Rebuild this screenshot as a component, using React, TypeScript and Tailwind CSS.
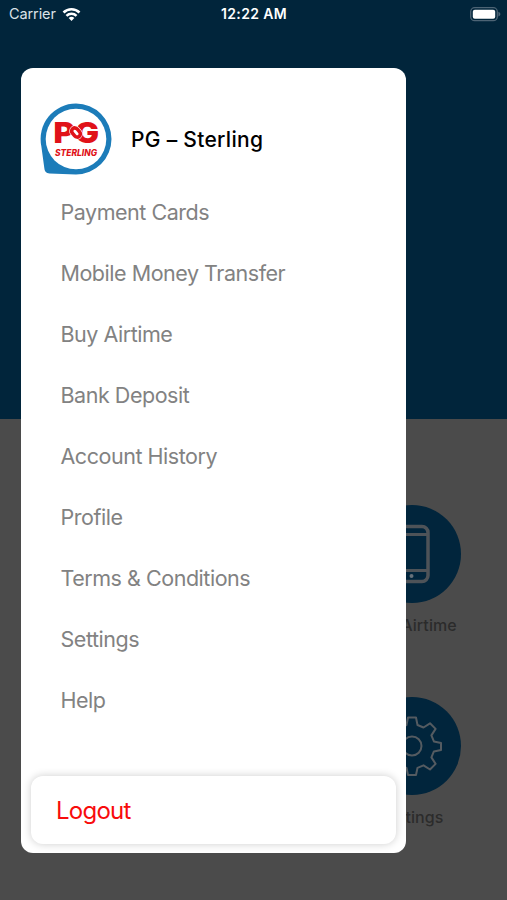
import type { ReactNode } from 'react'

const menuItems = [
  'Payment Cards',
  'Mobile Money Transfer',
  'Buy Airtime',
  'Bank Deposit',
  'Account History',
  'Profile',
  'Terms & Conditions',
  'Settings',
  'Help',
]

function WifiIcon() {
  return (
    <svg width="19" height="15" viewBox="0 0 20 15" fill="none" stroke="#fff" strokeWidth="2.7">
      <path d="M1.6 5.4a12 12 0 0 1 16.8 0" />
      <path d="M4.7 8.9a7.6 7.6 0 0 1 10.6 0" />
      <path d="M10 14.400 7 11.300a4.400 4.400 0 0 1 6 0Z" fill="#fff" stroke="none" />
    </svg>
  )
}

function BatteryIcon() {
  return (
    <svg width="31" height="15" viewBox="0 0 31 15">
      <rect x="0.7" y="0.7" width="26.6" height="13" rx="4" fill="none" stroke="#4d6475" strokeWidth="1.3" />
      <rect x="2.800" y="2.700" width="22.400" height="9" rx="2" fill="#fff" />
      <path d="M28.400 4.800c2.600 1 2.600 3.800 0 4.800Z" fill="#4d6475" />
    </svg>
  )
}

function Logo() {
  return (
    <svg width="72" height="72" viewBox="0 0 72 72" fontFamily="Inter, sans-serif">
      <path
        d="M36 .5a35.500 35.500 0 0 1 0 71L9.500 70.600Q4.500 70 4.300 65L1.300 43A35.500 35.500 0 0 1 36 .5Z"
        fill="#1c7cb9"
      />
      <circle cx="36" cy="36" r="30.300" fill="#fff" />
      <text x="13.600" y="39.800" fontSize="28" fontWeight="900" fill="#e01219" textLength="45.500" lengthAdjust="spacingAndGlyphs">
        PG
      </text>
      {/* interlocked link between the two letters */}
      <g transform="rotate(-40 36 29.500)" fill="none">
        <rect x="32.800" y="24.500" width="6.400" height="10" rx="3.200" stroke="#fff" strokeWidth="4.800" />
        <rect x="32.800" y="24.500" width="6.400" height="10" rx="3.200" fill="#fff" stroke="#e01219" strokeWidth="3.600" />
      </g>
      <text x="15" y="53.300" fontSize="8.700" fontWeight="800" fontStyle="italic" fill="#e01219" textLength="42" lengthAdjust="spacingAndGlyphs">
        STERLING
      </text>
    </svg>
  )
}

function PhoneIcon() {
  return (
    <svg width="60" height="60" viewBox="0 0 60 60" fill="none" stroke="#4e5358" strokeWidth="3.500">
      <rect x="13" y="2.500" width="33" height="55" rx="6" />
      <path d="M14 10.500h32M14 46.500h32" strokeWidth="3" />
      <circle cx="29.500" cy="52" r="2" fill="#66717a" stroke="none" />
    </svg>
  )
}

function GearIcon() {
  return (
    <svg width="60" height="60" viewBox="0 0 60 60" fill="none" stroke="#545b61" strokeWidth="2" strokeLinejoin="round">
      <circle cx="30" cy="30" r="9.500" />
      <path d="M26 1.500h8l1.500 7.500 6 2.500 6.500-4.200 5.600 5.600-4.200 6.500 2.500 6 7.100 1.500v7l-7.100 1.500-2.500 6 4.200 6.500-5.600 5.600-6.500-4.200-6 2.500-1.500 7.200h-8l-1.500-7.200-6-2.500-6.500 4.200-5.600-5.600 4.200-6.500-2.500-6-7.100-1.500v-7l7.100-1.500 2.500-6-4.200-6.500 5.600-5.600 6.500 4.200 6-2.500Z" />
    </svg>
  )
}

function Tile({ label, children }: { label: string; children: ReactNode }) {
  return (
    <div className="flex h-48 w-[98px] flex-col items-center">
      <div className="flex size-[98px] shrink-0 items-center justify-center rounded-full bg-[#01253c]">
        {children}
      </div>
      <span className="mt-3 whitespace-nowrap text-base leading-5 font-medium tracking-[0.1px] text-[#2b2b2b]">
        {label}
      </span>
    </div>
  )
}

export default function App() {
  return (
    <div className="relative flex h-[900px] w-[507px] flex-col overflow-hidden bg-[#4b4b4b] font-['Inter',sans-serif]">
      <header className="h-[419px] shrink-0 bg-[#01253b]">
        <div className="grid h-7 grid-cols-3 items-center pr-[6px] pl-[9px] text-white">
          <div className="flex items-center gap-[6px] text-[14.5px] tracking-[-0.1px] text-[#dbe2e7]">
            <span>Carrier</span>
            <WifiIcon />
          </div>
          <span className="pr-[2px] text-center text-sm font-semibold tracking-[0.35px]">12:22 AM</span>
          <div className="flex justify-end">
            <BatteryIcon />
          </div>
        </div>
      </header>

      <main className="flex flex-col items-end pt-[86px] pr-[46px]">
        <Tile label="Buy Airtime">
          <PhoneIcon />
        </Tile>
        <Tile label="Settings">
          <GearIcon />
        </Tile>
      </main>

      {/* Side menu */}
      <aside className="absolute top-[68px] left-[21px] flex h-[785px] w-[385px] flex-col overflow-hidden rounded-xl bg-white">
        <div className="flex items-center gap-[19px] pt-[35px] pl-[19px]">
          <Logo />
          <h1 className="pt-[2px] text-[21px] font-medium tracking-[0.3px] text-black">PG – Sterling</h1>
        </div>

        <nav className="mt-[6.5px] flex flex-col pl-[39.5px]">
          {menuItems.map((item) => (
            <a key={item} className="flex h-[61px] items-center text-[21.5px] tracking-[-0.47px] text-[#828282]">
              {item}
            </a>
          ))}
        </nav>

        <button className="mx-[10px] mt-auto mb-[9px] flex h-[68px] items-center rounded-xl bg-white pt-px pl-[25px] text-2xl tracking-[-0.75px] text-[#f80c0c] shadow-[0_0_9px_rgba(0,0,0,0.2)]">
          Logout
        </button>
      </aside>
    </div>
  )
}
